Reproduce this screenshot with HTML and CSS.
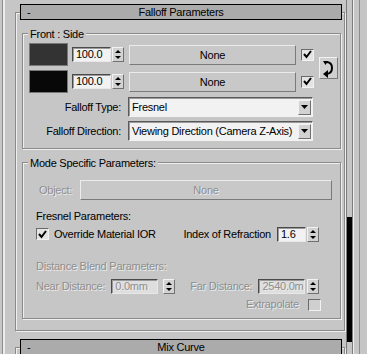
FILE: index.html
```html
<!DOCTYPE html>
<html>
<head>
    <meta charset="utf-8">
    <link rel="stylesheet" href="styles.css">
</head>
<body>
    <div class="panel">
        <div class="rollout">
            <div class="rollout-head"><span class="rollout-minus">-</span><span class="rollout-title">Falloff Parameters</span></div>

            <div class="group group-front">
                <div class="group-title">Front : Side</div>
                <div class="swatch-grid">
                    <div class="swatch swatch-front"></div>
                    <div class="spinner">
                        <div class="field">100.0</div>
                        <div class="arrows"><svg width="10" height="13" viewBox="0 0 10 13"><polygon points="5,2 8,5 2,5" fill="#000"/><polygon points="2,8 8,8 5,11" fill="#000"/></svg></div>
                    </div>
                    <div class="map-btn">None</div>
                    <div class="check"><svg width="11" height="11" viewBox="0 0 11 11"><path d="M2 5 L4.5 8 L9 2" fill="none" stroke="#000" stroke-width="2"/></svg></div>
                    <div class="swap-btn"><svg width="17" height="20" viewBox="0 0 17 20"><path d="M6 4 Q12 4 12 10 Q12 15 7 16" fill="none" stroke="#000" stroke-width="2"/><polygon points="3,3 8,3 5.5,7" fill="#000"/><polygon points="3,16 8,12 8,20" fill="#000"/></svg></div>

                    <div class="swatch swatch-side"></div>
                    <div class="spinner">
                        <div class="field">100.0</div>
                        <div class="arrows"><svg width="10" height="13" viewBox="0 0 10 13"><polygon points="5,2 8,5 2,5" fill="#000"/><polygon points="2,8 8,8 5,11" fill="#000"/></svg></div>
                    </div>
                    <div class="map-btn">None</div>
                    <div class="check"><svg width="11" height="11" viewBox="0 0 11 11"><path d="M2 5 L4.5 8 L9 2" fill="none" stroke="#000" stroke-width="2"/></svg></div>
                </div>

                <div class="combo-row">
                    <div class="combo-label">Falloff Type:</div>
                    <div class="combo">
                        <span class="combo-text">Fresnel</span>
                        <div class="combo-arrow"><svg width="7" height="4" viewBox="0 0 7 4"><polygon points="0,0 7,0 3.5,4" fill="#000"/></svg></div>
                    </div>
                </div>
                <div class="combo-row">
                    <div class="combo-label">Falloff Direction:</div>
                    <div class="combo">
                        <span class="combo-text">Viewing Direction (Camera Z-Axis)</span>
                        <div class="combo-arrow"><svg width="7" height="4" viewBox="0 0 7 4"><polygon points="0,0 7,0 3.5,4" fill="#000"/></svg></div>
                    </div>
                </div>
            </div>

            <div class="group group-mode">
                <div class="group-title">Mode Specific Parameters:</div>
                <div class="object-row">
                    <div class="object-label disabled">Object:</div>
                    <div class="map-btn object-btn disabled">None</div>
                </div>
                <div class="sub-title">Fresnel Parameters:</div>
                <div class="ior-row">
                    <div class="check"><svg width="11" height="11" viewBox="0 0 11 11"><path d="M2 5 L4.5 8 L9 2" fill="none" stroke="#000" stroke-width="2"/></svg></div>
                    <span class="ior-override">Override Material IOR</span>
                    <span class="ior-label">Index of Refraction</span>
                    <div class="spinner">
                        <div class="field field-ior">1.6</div>
                        <div class="arrows"><svg width="10" height="13" viewBox="0 0 10 13"><polygon points="5,2 8,5 2,5" fill="#000"/><polygon points="2,8 8,8 5,11" fill="#000"/></svg></div>
                    </div>
                </div>
                <div class="sub-title sub-distance disabled">Distance Blend Parameters:</div>
                <div class="dist-row">
                    <span class="disabled">Near Distance:</span>
                    <div class="spinner spinner-near">
                        <div class="field field-dist disabled">0.0mm</div>
                        <div class="arrows"><svg width="10" height="13" viewBox="0 0 10 13"><polygon points="5,2 8,5 2,5" fill="#000"/><polygon points="2,8 8,8 5,11" fill="#000"/></svg></div>
                    </div>
                    <span class="far-label disabled">Far Distance:</span>
                    <div class="spinner spinner-far">
                        <div class="field field-dist disabled">2540.0m</div>
                        <div class="arrows"><svg width="10" height="13" viewBox="0 0 10 13"><polygon points="5,2 8,5 2,5" fill="#000"/><polygon points="2,8 8,8 5,11" fill="#000"/></svg></div>
                    </div>
                </div>
                <div class="extra-row">
                    <span class="disabled">Extrapolate</span>
                    <div class="check check-off"></div>
                </div>
            </div>
        </div>

        <div class="rollout rollout-next">
            <div class="rollout-head"><span class="rollout-minus">-</span><span class="rollout-title">Mix Curve</span></div>
        </div>
    </div>
    <div class="scroll"><div class="scroll-thumb"></div></div>
    <div class="right-edge"></div>
</body>
</html>
```

FILE: styles.css
```css
* {
    margin: 0;
    padding: 0;
    box-sizing: border-box;
}

body {
    width: 367px;
    height: 354px;
    overflow: hidden;
    display: flex;
    background: #c6c6c6;
    font-family: 'Liberation Sans', Arial, sans-serif;
    font-size: 11px;
    letter-spacing: -0.25px;
    line-height: 13px;
    color: #000;
}

.panel {
    width: 344px;
    height: 354px;
    overflow: hidden;
    margin-left: 2px;
    border-left: 1px solid #8c8c8c;
    box-shadow: inset 2px 0 0 #ececec;
    padding: 4px 0 0 12px;
}

/* rollouts */
.rollout {
    width: 330px;
    margin-top: 8px;
    border: 1px solid #8a8a8a;
    box-shadow: inset 1px 1px 0 #efefef, 1px 1px 0 #efefef;
    padding-bottom: 11px;
}

.rollout-next {
    margin-top: 16px;
    height: 12px;
    padding-bottom: 0;
}

.rollout-head {
    height: 16px;
    margin: -9px 2px 0 4px;
    border: 1px solid #000;
    background: #ababab;
    display: flex;
    align-items: center;
}

.rollout-minus {
    padding-left: 6px;
    width: 20px;
}

.rollout-title {
    flex: 1;
    text-align: center;
    padding-right: 20px;
}

/* group boxes */
.group {
    width: 319px;
    margin: 13px 0 0 6px;
    border: 1px solid #8a8a8a;
    box-shadow: inset 1px 1px 0 #efefef, 1px 1px 0 #efefef;
}

.group-front {
    padding: 0 0 7px 0;
}

.group-mode {
    padding-bottom: 7px;
}

.group-title {
    width: fit-content;
    height: 13px;
    margin: -6px 0 0 5px;
    padding: 0 2px;
    background: #c6c6c6;
}

.swatch-grid {
    display: grid;
    grid-template-columns: 39px 51px 167px 13px 19px;
    grid-template-rows: 23px 23px;
    column-gap: 5px;
    row-gap: 4px;
    margin: 2px 0 0 6px;
    align-items: center;
}

.swatch-grid .spinner {
    margin-left: -1px;
}

.swatch {
    height: 23px;
    border: 1px solid #777;
}

.swatch-front {
    background: #333333;
}

.swatch-side {
    background: #080808;
}

.spinner {
    display: flex;
    align-items: center;
    gap: 1px;
}

.field {
    width: 39px;
    height: 15px;
    background: #f2f2f2;
    border: 1px solid;
    border-color: #4a4a4a #e8e8e8 #e8e8e8 #4a4a4a;
    box-shadow: inset 1px 1px 0 #9a9a9a;
    padding-left: 3px;
    line-height: 13px;
    white-space: nowrap;
    overflow: hidden;
}

.arrows {
    width: 12px;
    height: 15px;
    background: #d2d2d2;
    border: 1px solid;
    border-color: #f2f2f2 #707070 #707070 #f2f2f2;
    display: flex;
    align-items: center;
    justify-content: center;
}

.map-btn {
    height: 20px;
    background: #c8c8c8;
    border: 1px solid;
    border-color: #ececec #7a7a7a #7a7a7a #ececec;
    text-align: center;
    line-height: 18px;
}

.check {
    width: 13px;
    height: 12px;
    background: #e4e4e4;
    border: 1px solid;
    border-color: #6a6a6a #f2f2f2 #f2f2f2 #6a6a6a;
    display: flex;
    align-items: center;
    justify-content: center;
}

.check-off {
    background: #cfcfcf;
}

.swap-btn {
    grid-row: 1 / span 2;
    grid-column: 5;
    height: 22px;
    background: #d0d0d0;
    border: 1px solid;
    border-color: #f2f2f2 #7a7a7a #7a7a7a #f2f2f2;
    display: flex;
    align-items: center;
    justify-content: center;
}

/* dropdown rows */
.combo-row {
    display: flex;
    align-items: center;
    margin-top: 4px;
}

.combo-label {
    width: 98px;
    text-align: right;
    margin-right: 7px;
}

.combo {
    width: 185px;
    height: 20px;
    background: #f2f2f2;
    border: 1px solid;
    border-color: #5a5a5a #f2f2f2 #f2f2f2 #5a5a5a;
    box-shadow: inset 1px 1px 0 #9a9a9a;
    display: flex;
    align-items: center;
    padding: 0 0 0 3px;
}

.combo-text {
    flex: 1;
    white-space: nowrap;
}

.combo-arrow {
    width: 13px;
    height: 15px;
    margin-right: 1px;
    background: #d2d2d2;
    border: 1px solid;
    border-color: #f2f2f2 #707070 #707070 #f2f2f2;
    display: flex;
    align-items: center;
    justify-content: center;
}

/* mode specific */
.object-row {
    display: flex;
    align-items: center;
    margin-top: 10px;
    padding-left: 16px;
}

.object-label {
    width: 41px;
}

.object-btn {
    width: 252px;
}

.disabled {
    color: #8e8e8e;
    text-shadow: 1px 1px 0 #ececec;
}

.sub-title {
    margin: 10px 0 0 13px;
}

.ior-row {
    display: flex;
    align-items: center;
    height: 16px;
    margin-top: 3px;
    padding: 0 21px 0 13px;
}

.ior-override {
    margin-left: 5px;
}

.ior-label {
    margin: 0 6px 0 auto;
}

.field-ior {
    width: 29px;
}

.sub-distance {
    margin-top: 18px;
}

.dist-row {
    display: flex;
    align-items: center;
    height: 15px;
    margin-top: 6px;
    padding-left: 13px;
}

.field-dist {
    background: #dedede;
}

.spinner-near {
    margin-left: 6px;
    gap: 5px;
}

.spinner-near .field {
    width: 47px;
}

.far-label {
    margin-left: 15px;
}

.spinner-far {
    margin-left: 6px;
    gap: 2px;
}

.spinner-far .field {
    width: 47px;
}

.extra-row {
    display: flex;
    align-items: center;
    justify-content: flex-end;
    gap: 9px;
    height: 13px;
    margin-top: 4px;
    padding-right: 19px;
}

/* right side */
.scroll {
    width: 7px;
    border-left: 1px solid #7c7c7c;
    border-right: 1px solid #7c7c7c;
}

.scroll-thumb {
    margin-top: 217px;
    height: 125px;
    background: #000;
}

.right-edge {
    flex: 1;
    border-left: 1px solid #efefef;
    box-shadow: inset 5px 0 0 #c6c6c6, inset 6px 0 0 #8c8c8c;
}
```
